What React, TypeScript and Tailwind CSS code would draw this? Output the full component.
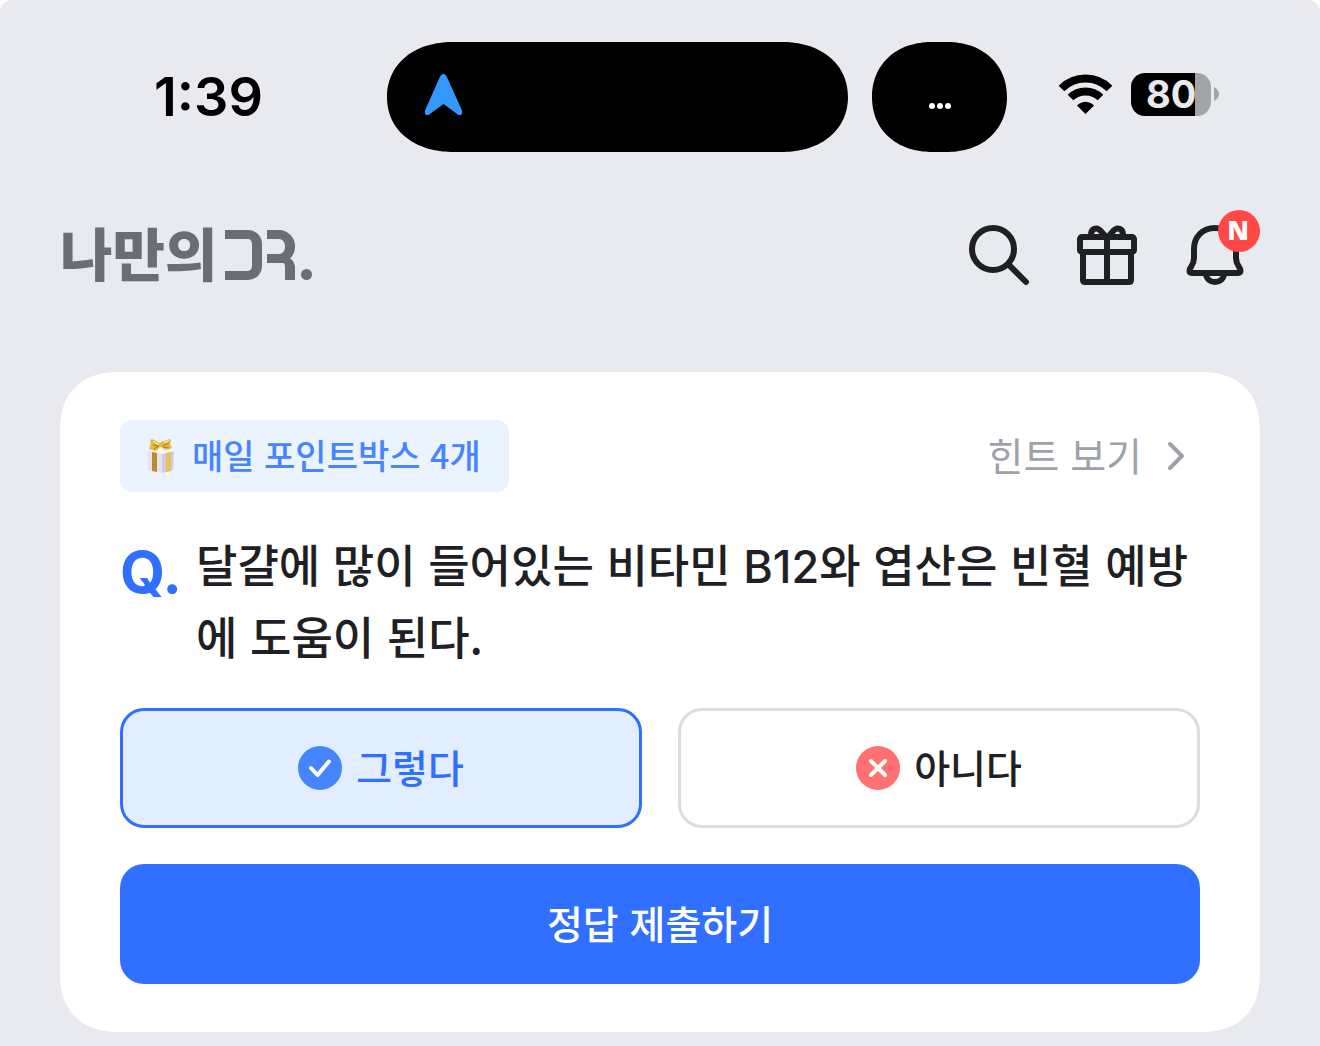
import React from "react";

const korean = "font-['Noto_Sans_CJK_KR',sans-serif]";

function StatusBar() {
  return (
    <div className="grid grid-cols-[387px_1fr_313px] items-center pt-[42px]">
      <time className="pl-[154px] font-[Inter,sans-serif] text-[54px] leading-[110px] font-semibold text-black">1:39</time>
      <div className="flex gap-6">
        <div className="flex h-[110px] grow items-center rounded-[66px/55px] bg-black pb-1 pl-[37px] [corner-shape:superellipse(1.1)]">
          <svg width="39" height="44" viewBox="0 0 39 44" aria-hidden="true">
            <path d="M16.2 3.2Q19.5-1.8 22.6 3.2L38 37.500Q39 42.500 34.500 42L19.500 31L4.500 42Q0 42.500 1 37.500Z" fill="#3399ff" />
          </svg>
        </div>
        <div className="flex h-[110px] w-[135px] items-center justify-center gap-[2px] rounded-[60px/55px] bg-black pt-[17px] [corner-shape:superellipse(1.1)]">
          <i className="size-[6px] rounded-full bg-white" />
          <i className="size-[6px] rounded-full bg-white" />
          <i className="size-[6px] rounded-full bg-white" />
        </div>
      </div>
      <div className="flex items-center gap-[18px] pb-[6px] pl-[51px]">
        <svg width="55" height="42" viewBox="0 0 55 42" aria-label="Wi-Fi">
          <g fill="none" stroke="#000" strokeWidth="8">
            <path d="M3.500 15.500A34 34 0 0 1 51.500 15.500" />
            <path d="M12.500 24.500A21.500 21.500 0 0 1 42.500 24.500" />
          </g>
          <path d="M27.500 41L19 32.500Q27.500 25 36 32.500Z" fill="#000" />
        </svg>
        <div className="flex items-center gap-[3px]">
          <div className="h-[43px] w-20 rounded-[14px] bg-linear-to-r from-black from-80% to-[#a3a4a7] to-80% pl-[15px] font-[Inter,sans-serif] text-[38px] leading-[43px] font-bold text-[#e9eaef]">80</div>
          <svg width="5" height="14" viewBox="0 0 5 14" aria-hidden="true"><path d="M0 0Q5 3 5 7T0 14Z" fill="#a3a4a7" /></svg>
        </div>
      </div>
    </div>
  );
}

function Logo() {
  return (
    <a href="#" aria-label="나만의DR." className="flex items-center text-[#6b6d76]">
      <span className={`${korean} pb-2 text-[57px] leading-[64px] font-black`}>나만의</span>
      <span className="ml-2 flex h-[50px]" aria-hidden="true">
        <i className="h-[50px] w-[37px] rounded-r-[14px] border-y-[9px] border-r-[10px] border-current" />
        <span className="ml-[5px] flex flex-col">
          <i className="h-[33px] w-7 rounded-r-[16px] border-y-[9px] border-r-[10px] border-current" />
          <i className="-mt-[7px] h-6 w-7 rounded-tr-[12px] border-t-[7px] border-r-[10px] border-current" />
        </span>
        <i className="ml-[6px] size-[11px] self-end rounded-full bg-current" />
      </span>
    </a>
  );
}

function Header() {
  return (
    <header className="flex items-center justify-between pt-[67px] pr-[69px] pl-[60px]">
      <Logo />
      <nav className="flex gap-9 text-[#1f2024]">
        <button aria-label="검색">
          <svg width="72" height="72" viewBox="0 0 24 24" fill="none" stroke="currentColor" strokeWidth="2" strokeLinecap="round">
            <circle cx="10" cy="10" r="7" /><path d="M15.300 15.300L21 21" />
          </svg>
        </button>
        <button aria-label="선물">
          <svg width="72" height="72" viewBox="0 0 24 24" fill="none" stroke="currentColor" strokeWidth="2" strokeLinejoin="round">
            <rect x="3" y="6" width="18" height="5" rx=".7" />
            <path d="M4 11V20.300Q4 21 4.700 21H19.300Q20 21 20 20.300V11M12 6V21M12 6.300L10.200 4.300C8.500 2.200 6.300 3.300 6.800 6M12 6.300L13.800 4.300C15.500 2.200 17.700 3.300 17.200 6" />
          </svg>
        </button>
        <button aria-label="알림" className="relative">
          <svg width="72" height="72" viewBox="0 0 24 24" fill="none" stroke="currentColor" strokeWidth="2" strokeLinejoin="round">
            <path d="M12 3C7.800 3 5 6 5 10V13C5 15.500 3.500 16 3.500 17.200Q3.500 18 4.300 18H19.700Q20.500 18 20.500 17.200C20.500 16 19 15.500 19 13V10C19 6 16.200 3 12 3ZM9 18C9 22 15 22 15 18" />
          </svg>
          <span className="absolute -top-[9px] right-[-9px] size-[42px] rounded-full bg-[#ff4848] pr-[2px] font-['Open_Sans',sans-serif] text-[26px] leading-[40px] font-extrabold text-white">N</span>
        </button>
      </nav>
    </header>
  );
}

function GiftIcon() {
  return (
    <svg width="30" height="36" viewBox="0 0 30 36" aria-hidden="true">
      <path d="M2 13L16 16V35L2 32Z" fill="#e6e3f0" />
      <path d="M16 16L28 13L27 32L16 35Z" fill="#d0cbdc" />
      <path d="M2 13L14 11L28 13L16 16Z" fill="#f8f6fc" />
      <path d="M6 14L11 15V34L6 33Z" fill="#b98b2e" />
      <path d="M20 15L25 14V33L20 34Z" fill="#e3c45c" />
      <path d="M14 5L6 1Q3 2 5 5L3 11L10 13L14 9L19 12L26 10L24 6Q26 2 24 1L17 3Z" fill="#e5b83f" />
      <path d="M7 7L13 8L8 11M17 8L23 5M17 9L23 10" stroke="#a97820" strokeWidth="1" fill="none" />
      <path d="M7 3L13 7M18 4L23 3M15 10L18 11" stroke="#fae6a0" strokeWidth="1.5" />
    </svg>
  );
}

function Choice({ label, selected, children }: { label: string; selected?: boolean; children: React.ReactNode }) {
  return (
    <button
      aria-pressed={!!selected}
      className={`flex h-[120px] items-center justify-center gap-[14px] rounded-3xl border-3 text-[39px] font-medium ${selected ? "border-[#306fff] bg-[#e2eeff] text-[#306fff]" : "border-[#dcdde3] bg-white text-[#1f2024]"}`}
    >
      <svg width="44" height="44" viewBox="0 0 44 44" fill="none" stroke="#fff" strokeWidth="4" strokeLinecap="round" strokeLinejoin="round" aria-hidden="true">
        {children}
      </svg>
      <span className="pb-1">{label}</span>
    </button>
  );
}

export default function App() {
  return (
    <div className="min-h-screen bg-white">
      <div className={`${korean} min-h-screen rounded-t-xl bg-[#e9eaef] pb-[14px]`} lang="ko">
        <StatusBar />
        <Header />
        <main className="mx-[60px] mt-[81px] rounded-[60px] bg-white px-[60px] py-12 [corner-shape:superellipse(1.25)]">
          <div className="flex items-center justify-between">
            <div className="flex h-[72px] items-center gap-4 rounded-xl bg-[#ebf3ff] pr-7 pl-[26px] text-[34px] font-medium text-[#4785ff]">
              <GiftIcon />
              <span className="pb-1">매일 포인트박스 4개</span>
            </div>
            <button className="flex h-[72px] items-center gap-6 pr-[14px] text-[39px] text-[#9fa1a9]">
              <span className="pb-1">힌트 보기</span>
              <svg width="20" height="30" viewBox="0 0 20 30" fill="none" stroke="currentColor" strokeWidth="4" strokeLinecap="round" strokeLinejoin="round" aria-hidden="true"><path d="M4 3L16 15L4 27" /></svg>
            </button>
          </div>
          <div className="mt-9 flex">
            <span className="w-[76px] shrink-0 font-[Inter,sans-serif] text-[58px] leading-[88px] font-bold text-[#306fff]">Q.</span>
            <h1 className="text-[45px] leading-[72px] font-medium text-[#1f2024]">달걀에 많이 들어있는 비타민 <span className="font-[Inter,sans-serif] leading-none">B12</span>와 엽산은 빈혈 예방에 도움이 된다.</h1>
          </div>
          <div className="mt-9 grid grid-cols-2 gap-9">
            <Choice label="그렇다" selected>
              <circle cx="22" cy="22" r="22" fill="#4785ff" stroke="none" /><path d="M13 22L19.500 29L31 15.500" />
            </Choice>
            <Choice label="아니다">
              <circle cx="22" cy="22" r="22" fill="#ff7070" stroke="none" /><path d="M15 15L29 29M29 15L15 29" />
            </Choice>
          </div>
          <button className="mt-9 h-[120px] w-full rounded-3xl bg-[#306fff] pb-1 text-[39px] font-medium text-white">정답 제출하기</button>
        </main>
      </div>
    </div>
  );
}
